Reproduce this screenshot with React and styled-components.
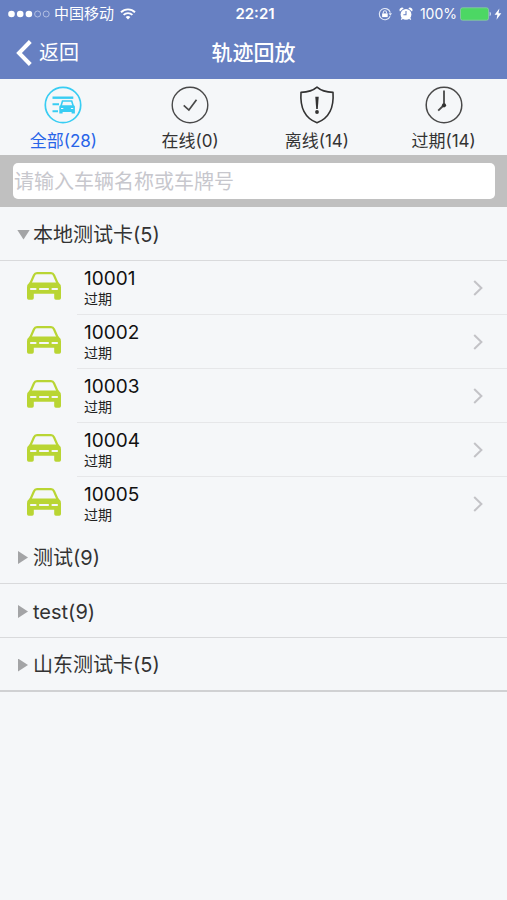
import React, { useState } from 'react';
import styled, { createGlobalStyle } from "styled-components";


const tabs = [
    { id: 'all', label: '全部', count: 28, icon: <AllIcon /> },
    { id: 'online', label: '在线', count: 0, icon: <OnlineIcon /> },
    { id: 'offline', label: '离线', count: 14, icon: <OfflineIcon /> },
    { id: 'expired', label: '过期', count: 14, icon: <ExpiredIcon /> },
];

const groups = [
    { name: '本地测试卡', count: 5, cars: ['10001', '10002', '10003', '10004', '10005'] },
    { name: '测试', count: 9, cars: [] },
    { name: 'test', count: 9, cars: [] },
    { name: '山东测试卡', count: 5, cars: [] },
];

export default function App() {
    const [activeTab, setActiveTab] = useState('all');
    const [openGroup, setOpenGroup] = useState('本地测试卡');

    return (
        <>
        <GlobalStyle />
        <Header>
            <StatusBar>
                <StatusLeft>
                    <SignalIcon />
                    <span>中国移动</span>
                    <WifiIcon />
                </StatusLeft>
                <Clock>22:21</Clock>
                <StatusRight>
                    <LockIcon />
                    <AlarmIcon />
                    <span>100%</span>
                    <BatteryIcon />
                </StatusRight>
            </StatusBar>
            <NavBar>
                <BackButton type="button">
                    <svg width="16" height="26" viewBox="0 0 16 26" fill="none" stroke="#fff" strokeWidth="4">
                        <path d="M14.3 1.5 3 13l11.3 11.5" />
                    </svg>
                    返回
                </BackButton>
                <Title>轨迹回放</Title>
            </NavBar>
        </Header>

        <Tabs>
            {tabs.map((tab) => (
                <Tab key={tab.id} type="button" $active={tab.id === activeTab} onClick={() => setActiveTab(tab.id)}>
                    {tab.icon}
                    {tab.label}({tab.count})
                </Tab>
            ))}
        </Tabs>

        <SearchBar>
            <SearchInput type="text" aria-label="搜索车辆" placeholder="请输入车辆名称或车牌号" />
        </SearchBar>

        <main>
            {groups.map((group) => {
                const open = group.name === openGroup;
                return (
                    <section key={group.name}>
                        <GroupHeader type="button" aria-expanded={open} onClick={() => setOpenGroup(open ? '' : group.name)}>
                            <Arrow $open={open} />
                            {group.name}({group.count})
                        </GroupHeader>
                        {open && (
                            <CarList>
                                {group.cars.map((car) => <CarRow key={car} name={car} />)}
                            </CarList>
                        )}
                    </section>
                );
            })}
        </main>
        </>
    )
}

function CarRow({ name }) {
    return (
        <CarItem>
            <CarIcon />
            <CarBody type="button">
                <CarText>
                    <CarName>{name}</CarName>
                    <CarState>过期</CarState>
                </CarText>
                <svg width="10" height="16" viewBox="0 0 10 16" fill="none" stroke="#c3c3c7" strokeWidth="2">
                    <path d="M1.2 1 8.4 8l-7.2 7" />
                </svg>
            </CarBody>
        </CarItem>
    )
}

function SignalIcon() {
    return (
        <svg width="42" height="8" viewBox="0 0 42 8" fill="#fff">
            <circle cx="3.5" cy="4" r="3.3" />
            <circle cx="12.2" cy="4" r="3.3" />
            <circle cx="20.9" cy="4" r="3.3" />
            <g fill="none" stroke="#c3cdea" strokeWidth="0.8">
                <circle cx="29.6" cy="4" r="3" />
                <circle cx="38.2" cy="4" r="3" />
            </g>
        </svg>
    )
}

function WifiIcon() {
    return (
        <svg width="16" height="12" viewBox="0 0 16 12" fill="none" stroke="#fff" strokeWidth="1.9">
            <path d="M1 4.2a10 10 0 0 1 14 0" />
            <path d="M3.6 6.9a6.3 6.3 0 0 1 8.8 0" />
            <path d="M8 11.5 5.6 9.1a3.4 3.4 0 0 1 4.8 0z" fill="#fff" stroke="none" />
        </svg>
    )
}

function LockIcon() {
    return (
        <svg width="14" height="14" viewBox="0 0 14 14" fill="none" stroke="#e6ebf8" strokeWidth="1.1">
            <path d="M12.1 9.2A5.6 5.6 0 1 1 12.3 5.6" />
            <path d="M10.6 6.2h3.4l-1.7 2.6z" fill="#e6ebf8" stroke="none" />
            <path d="M4.1 6.4h5.6v3.7H4.100z" fill="#fff" stroke="none" />
            <path d="M5.300 6.600V5.400a1.600 1.600 0 0 1 3.200 0v1.200" />
        </svg>
    )
}

function AlarmIcon() {
    return (
        <svg width="14" height="14" viewBox="0 0 14 14" fill="#fff">
            <circle cx="7" cy="7.4" r="5.4" />
            <path d="M1 4.600A2.500 2.500 0 0 1 4.700 1.300zM13 4.600A2.500 2.500 0 0 0 9.300 1.300z" />
            <path d="m3.6 10.8-1.3 1.900M10.4 10.8l1.3 1.900" stroke="#fff" strokeWidth="1.3" />
            <path d="M7 4v3.700H4.400" fill="none" stroke="#6780c2" strokeWidth="1.1" />
        </svg>
    )
}

function BatteryIcon() {
    return (
        <svg width="42" height="14" viewBox="0 0 42 14">
            <rect x="0.5" y="0.8" width="28" height="12.4" rx="2" fill="#4cd764" stroke="#8ec9a8" strokeWidth="0.8" />
            <path d="M29.6 4.8a2.4 2.4 0 0 1 0 4.4z" fill="#c9d6ee" />
            <path d="M39.4 1.4 34.6 7.7h2.8l-.9 5.1 4.8-6.5h-2.8z" fill="#fff" />
        </svg>
    )
}

function AllIcon() {
    return (
        <svg width="38" height="38" viewBox="0 0 38 38" fill="none" stroke="#38cdf3">
            <circle cx="19" cy="19" r="17.7" strokeWidth="1.7" />
            <path d="M8.5 11.7h20.8" strokeWidth="2.4" />
            <path d="M8.5 18.3h6.500M8.5 25.2h5.5" strokeWidth="2" />
            <path d="M17 20 18.500 15h9.200l1.500 5" strokeWidth="1.6" />
            <path d="M15.300 20.6q.3-1.400 1.700-1.400h12.200q1.400 0 1.700 1.400v7h-3.300v-1.700h-9v1.700h-3.300z" fill="#38cdf3" stroke="none" />
            <path d="M17 22.5h2.300M26.900 22.5h2.300" stroke="#f5f7f9" strokeWidth="1.2" />
        </svg>
    )
}

function OnlineIcon() {
    return (
        <svg width="38" height="38" viewBox="0 0 38 38" fill="none" stroke="#494949" strokeWidth="1.4">
            <circle cx="19" cy="19" r="17.8" />
            <path d="m12.7 19.4 5.2 4.7 7.6-10.3" strokeWidth="1.7" />
        </svg>
    )
}

function OfflineIcon() {
    return (
        <svg width="38" height="38" viewBox="0 0 38 38" fill="none" stroke="#333" strokeWidth="1.6">
            <path d="M19 1.2c4 3.5 9.5 5 16 5.2 1 14-3 25.5-16 30.4C6 31.9 2 20.4 3 6.4 9.5 6.2 15 4.7 19 1.2z" strokeLinejoin="round" />
            <path d="M17.3 10.8h3.4l-.9 12.2h-1.6z" fill="#333" stroke="none" />
            <circle cx="19" cy="26" r="1.9" fill="#333" stroke="none" />
        </svg>
    )
}

function ExpiredIcon() {
    return (
        <svg width="38" height="38" viewBox="0 0 38 38" fill="none" stroke="#494949" strokeWidth="1.5">
            <circle cx="19" cy="19" r="17.8" />
            <path d="M19 4.5V19l-5.8 5.7" strokeWidth="1.8" />
            <circle cx="19" cy="19.3" r="2.1" fill="#333" stroke="none" />
        </svg>
    )
}

function CarIcon() {
    return (
        <svg width="34" height="28" viewBox="0 0 34 28">
            <path d="M2.900 12.500 7 3.200Q7.900 1.200 10 1.200h14q2.100 0 3 2l4.100 9.300" fill="none" stroke="#b9d533" strokeWidth="2.200" />
            <path d="M2.500 10.500h29Q34 12.300 34 15.500V26q0 1.700-1.700 1.700h-3.400q-1.700 0-1.700-1.700v-4.300H6.800V26q0 1.700-1.700 1.700H1.700Q0 27.700 0 26V15.500q0-3.200 2.500-5z" fill="#b9d533" />
            <path d="M4 17h4.500M13 17h8M25.500 17h4.500" stroke="#f5f7f9" strokeWidth="2.200" strokeLinecap="round" />
        </svg>
    )
}


const GlobalStyle = createGlobalStyle`
    * {
        box-sizing: border-box;
    }

    body {
        margin: 0;
        background: #f5f7f9;
        color: #333;
        font-family: Inter, "Noto Sans CJK SC", sans-serif;
    }

    button {
        border: none;
        padding: 0;
        background: none;
        color: inherit;
        font: inherit;
        cursor: pointer;
    }

    svg {
        display: block;
        flex-shrink: 0;
    }
`;

const Header = styled.header`
    background: #6780c2;
    color: #fff;
`;

const StatusBar = styled.div`
    display: grid;
    grid-template-columns: 1fr auto 1fr;
    align-items: center;
    height: 27px;
    padding: 0 5px 0 8px;
    font-size: 15px;
    line-height: 20px;
`;

const StatusLeft = styled.div`
    display: flex;
    align-items: center;
    gap: 4px;

    svg:last-child {
        margin-left: 2px;
    }
`;

const StatusRight = styled.div`
    display: flex;
    align-items: center;
    justify-content: flex-end;
    gap: 7px;

    span {
        font-size: 14px;
    }

    svg:last-child {
        margin-left: -4px;
    }
`;

const Clock = styled.div`
    font-weight: 600;
`;

const NavBar = styled.div`
    display: grid;
    grid-template-columns: 1fr auto 1fr;
    align-items: center;
    height: 52px;
    padding: 0 16px;
`;

const BackButton = styled.button`
    && {
        display: flex;
        align-items: center;
        justify-self: start;
        gap: 7px;
        font-size: 20px;
        line-height: 28px;
    }
`;

const Title = styled.h1`
    margin: 0;
    font-size: 21px;
    line-height: 28px;
    font-weight: 500;
`;

const Tabs = styled.nav`
    display: grid;
    grid-template-columns: repeat(4, 1fr);
    height: 76px;
`;

const Tab = styled.button`
    && {
        display: flex;
        flex-direction: column;
        align-items: center;
        gap: 5px;
        padding-top: 7px;
        font-size: 17px;
        line-height: 24px;
        color: ${({ $active }) => ($active ? '#2864e8' : '#333')};
    }
`;

const SearchBar = styled.div`
    padding: 8px 12px 8px 13px;
    background: #c0c0c0;
`;

const SearchInput = styled.input`
    display: block;
    width: 100%;
    height: 36px;
    padding: 1px 1px 0;
    border: none;
    border-radius: 5px;
    background: #fff;
    color: #333;
    font-family: inherit;
    font-size: 20px;

    &::placeholder {
        color: #c7c7cd;
        opacity: 1;
    }
`;

const GroupHeader = styled.button`
    && {
        display: flex;
        align-items: center;
        width: 100%;
        height: 54px;
        padding: 2px 0 0 17px;
        border-bottom: 1px solid #d9dadc;
        font-size: 20px;
        line-height: 28px;
    }

    section:last-child > && {
        border-bottom: 2px solid #d0d1d3;
    }
`;

const Arrow = styled.span`
    width: 16px;

    &::before {
        content: "";
        display: block;
        width: ${({ $open }) => ($open ? '13px' : '10px')};
        height: ${({ $open }) => ($open ? '10px' : '13px')};
        margin-left: ${({ $open }) => ($open ? '0' : '1px')};
        background: #a3a4a6;
        clip-path: ${({ $open }) => ($open ? 'polygon(0 0, 100% 0, 50% 100%)' : 'polygon(0 0, 100% 50%, 0 100%)')};
    }
`;

const CarList = styled.ul`
    margin: 0;
    padding: 0;
    list-style: none;
`;

const CarBody = styled.button`
    && {
        display: flex;
        flex: 1;
        align-items: center;
        justify-content: space-between;
        padding: 7px 24px 6px 7px;
        border-bottom: 1px solid #e6e7e9;
        text-align: left;
    }
`;

const CarItem = styled.li`
    display: flex;
    align-items: center;
    gap: 16px;
    padding-left: 27px;

    > svg {
        margin-bottom: 4px;
    }

    &&:last-child ${CarBody} {
        border-bottom: none;
    }
`;

const CarText = styled.span`
    display: flex;
    flex-direction: column;
`;

const CarName = styled.span`
    color: #111;
    font-size: 19px;
    line-height: 22px;
`;

const CarState = styled.span`
    color: #222;
    font-size: 14px;
    line-height: 18px;
`;
